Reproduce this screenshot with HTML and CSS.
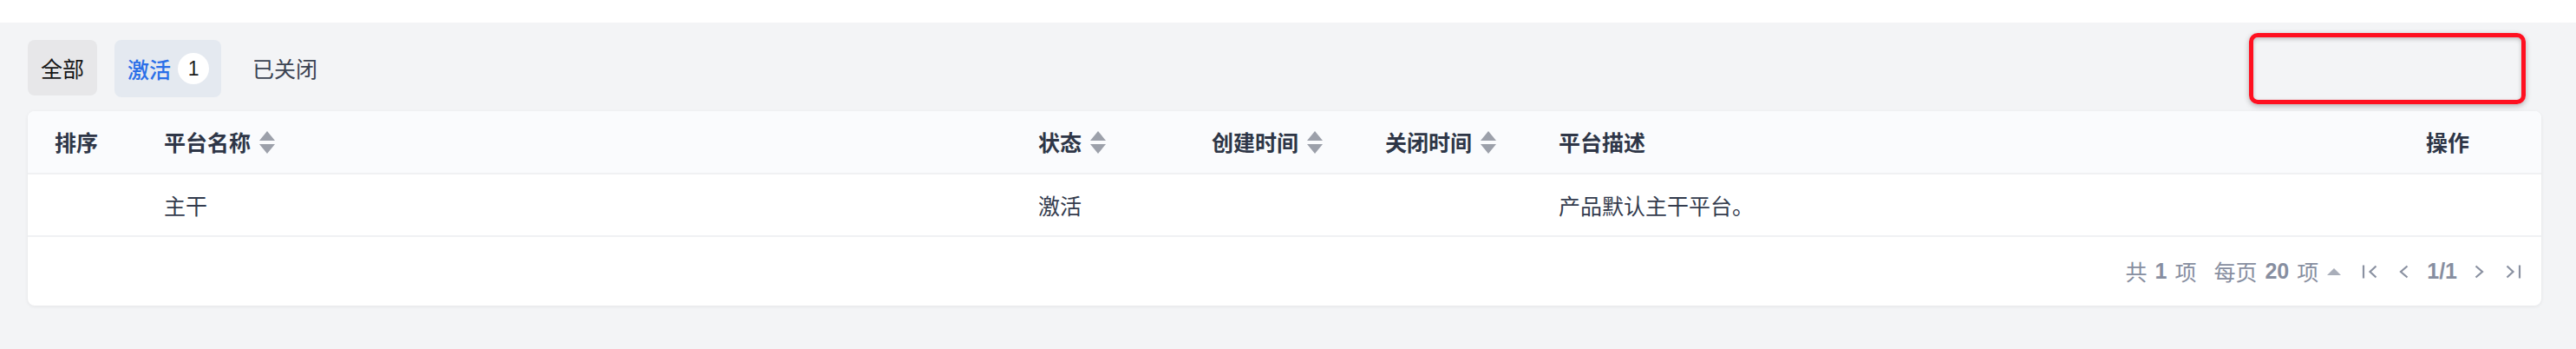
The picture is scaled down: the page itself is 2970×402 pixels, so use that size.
FILE: index.html
```html
<!DOCTYPE html>
<html lang="zh-CN">
<head>
<meta charset="utf-8">
<title>平台</title>
<link rel="stylesheet" href="styles.css">
</head>
<body>
<div class="topband"></div>
<main class="page">
  <div class="toolbar">
    <div class="tabs">
      <div class="tab tab-all">全部</div>
      <div class="tab tab-active">激活<span class="badge">1</span></div>
      <div class="tab tab-plain">已关闭</div>
    </div>
    <div class="highlight"></div>
  </div>

  <section class="card">
    <div class="row head">
      <div class="cell">排序</div>
      <div class="cell">平台名称<span class="sort"><i class="up"></i><i class="down"></i></span></div>
      <div class="cell">状态<span class="sort"><i class="up"></i><i class="down"></i></span></div>
      <div class="cell">创建时间<span class="sort"><i class="up"></i><i class="down"></i></span></div>
      <div class="cell">关闭时间<span class="sort"><i class="up"></i><i class="down"></i></span></div>
      <div class="cell">平台描述</div>
      <div class="cell">操作</div>
    </div>
    <div class="row body">
      <div class="cell"></div>
      <div class="cell">主干</div>
      <div class="cell">激活</div>
      <div class="cell"></div>
      <div class="cell"></div>
      <div class="cell">产品默认主干平台。</div>
      <div class="cell"></div>
    </div>
    <div class="pager">
      <span class="total">共<b>1</b>项</span>
      <span class="size">每页<b>20</b>项<span class="caret"></span></span>
      <svg class="pi first" width="18" height="18" viewBox="0 0 18 18"><path d="M2 1.5v15M16.5 2.5L9.5 9l7 6.5" fill="none" stroke="#8a91a1" stroke-width="2.2"/></svg>
      <svg class="pi prev" width="12" height="18" viewBox="0 0 12 18"><path d="M10.5 2.5L3 9l7.5 6.5" fill="none" stroke="#8a91a1" stroke-width="2.2"/></svg>
      <b class="pages">1/1</b>
      <svg class="pi next" width="12" height="18" viewBox="0 0 12 18"><path d="M1.5 2.5L9 9l-7.5 6.5" fill="none" stroke="#8a91a1" stroke-width="2.2"/></svg>
      <svg class="pi last" width="18" height="18" viewBox="0 0 18 18"><path d="M1.5 2.5L8.5 9l-7 6.5M16 1.5v15" fill="none" stroke="#8a91a1" stroke-width="2.2"/></svg>
    </div>
  </section>
</main>
</body>
</html>
```

FILE: styles.css
```css
* { box-sizing: border-box; }
html, body { margin: 0; padding: 0; }
html { overflow: hidden; }
body {
  background: #f3f4f6;
  font-family: "Noto Sans CJK SC", "Noto Sans", sans-serif;
  font-size: 25px;
  color: #333b4d;
  height: 402px;
}
.topband { height: 26px; background: #ffffff; }
.page { padding: 20px 40px 0 32px; }

.toolbar { position: relative; }
.tabs { display: flex; align-items: flex-start; gap: 20px; }
.tab {
  height: 64px;
  padding: 0 15px;
  display: flex;
  align-items: center;
  border-radius: 8px;
  line-height: 1;
}
.tab-all { background: #e7e7e9; color: #161616; }
.tab-active { background: #e4e9f0; color: #2a6fe8; height: 66px; padding-right: 14px; font-weight: 500; }
.tab-plain { color: #3b4352; padding-left: 16px; }
.badge {
  margin-left: 8px;
  width: 36px; height: 36px;
  border-radius: 50%;
  background: #ffffff;
  color: #1c1c1c;
  font-family: "Liberation Sans", sans-serif;
  font-size: 23px;
  display: flex; align-items: center; justify-content: center;
  font-weight: normal;
}
.highlight {
  position: absolute;
  right: 18px;
  top: -8px;
  width: 319px;
  height: 82px;
  border: 5px solid #ff1020;
  border-radius: 10px;
  box-shadow: 0 2px 6px rgba(0,0,0,0.28), inset 0 2px 5px rgba(0,0,0,0.22);
}

.card {
  margin-top: 16px;
  background: #ffffff;
  border-radius: 8px;
  box-shadow: 0 1px 4px rgba(0,0,0,0.07);
  overflow: hidden;
}
.row {
  display: grid;
  grid-template-columns: 126px 1008px 200px 200px 200px 1000px 1fr;
  align-items: center;
  border-bottom: 2px solid #f0f1f3;
}
.row.head { height: 73px; background: #fafbfd; font-weight: 700; color: #2e3647; }
.row.body { height: 72px; color: #333b4d; }
.cell { padding-left: 31px; display: flex; align-items: center; line-height: 1; white-space: nowrap; }

.sort { display: inline-flex; flex-direction: column; gap: 4px; margin-left: 10px; }
.sort i { display: block; width: 0; height: 0; border-left: 9px solid transparent; border-right: 9px solid transparent; }
.sort .up { border-bottom: 11px solid #9ca0aa; }
.sort .down { border-top: 11px solid #9ca0aa; }

.pager {
  height: 79px;
  display: flex;
  align-items: center;
  justify-content: flex-end;
  padding-right: 23px;
  color: #878ea0;
  font-size: 25px;
  line-height: 1;
}
.pager b { font-family: "Liberation Sans", "Noto Sans CJK SC", sans-serif; font-weight: 700; }
.total b, .size b { margin: 0 9px; }
.total { margin-right: 20px; display: inline-flex; align-items: center; }
.size { display: inline-flex; align-items: center; }
.caret {
  display: inline-block; width: 0; height: 0; margin-left: 10px;
  border-left: 8px solid transparent; border-right: 8px solid transparent;
  border-bottom: 8px solid #a9aeb9;
}
.pi { display: block; }
.first { margin-left: 24px; }
.prev { margin-left: 24px; }
.pages { margin-left: 21px; font-size: 25px; }
.next { margin-left: 20px; }
.last { margin-left: 24px; }
```
